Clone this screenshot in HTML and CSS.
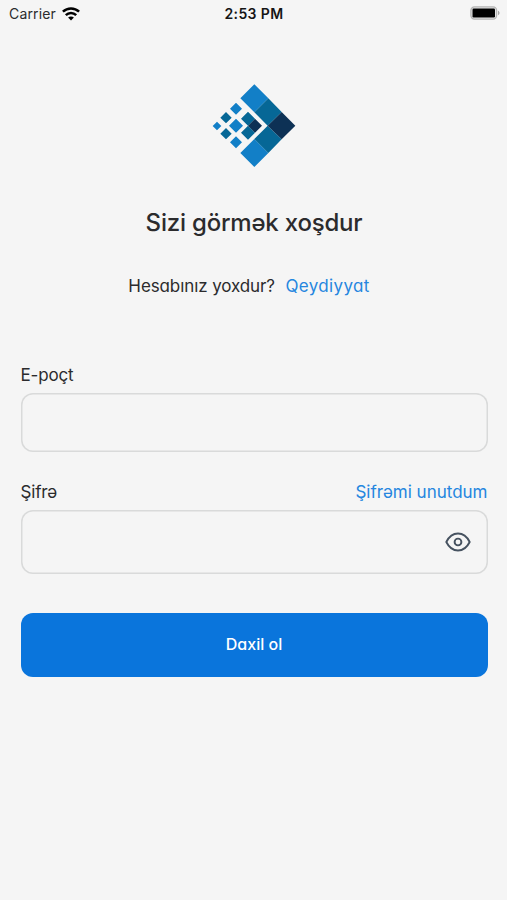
FILE: index.html
```html
<!DOCTYPE html>
<html lang="az">
<head>
<meta charset="utf-8">
<title>Daxil ol</title>
<link rel="stylesheet" href="styles.css">
</head>
<body>
<header class="status">
  <div class="carrier"><span>Carrier</span>
    <svg class="wifi" viewBox="0 0 18 14" fill="none" stroke="#000" stroke-width="2.5"><path d="M.9 4.7C5.5.3 12.500.3 17.100 4.700M3.800 8.100c3-2.900 7.400-2.900 10.400 0"/><path d="M9 13.500 6.100 10.600c1.600-1.500 4.200-1.500 5.800 0Z" fill="#000" stroke="none"/></svg>
  </div>
  <span class="time">2:53 PM</span>
  <svg class="battery" viewBox="0 0 31 14"><rect x=".9" y=".9" width="25.700" height="12.200" rx="3.500" fill="#e6e6e6" stroke="#b4b4b4" stroke-width="1.300"/><rect x="2.500" y="2.500" width="22.500" height="9" rx="1.200"/><path d="M28 4.800c2 .7 2 3.700 0 4.400Z" fill="#a6a6a6"/></svg>
</header>
<main class="login">
  <svg class="logo" viewBox="23 23 252 252">
    <g fill="#127fc7"><path d="M150 24 192 66 150 108 108 66ZM150 188 192 230 150 272 108 230ZM95 79 113 97 95 115 77 97ZM38 136 51 149 38 162 25 149ZM95 127 116 148 95 169 74 148ZM95 180 113 198 95 216 77 198Z"/></g>
    <g fill="#066796"><path d="M192 66 232 107 190 148 150 108ZM190 148 232 189 192 230 150 188ZM131 106 152 127 131 148 110 127ZM131 148 152 169 131 190 110 169ZM65 107 82 124 65 141 48 124ZM65 155 82 172 65 189 48 172Z"/></g>
    <path fill="#0d3155" d="M232 107 273 148 232 189 190 148ZM152 127 173 148 152 169 131 148Z"/>
  </svg>
  <h1 class="title">Sizi görmək xoşdur</h1>
  <p class="signup"><span class="question">Hesabınız yoxdur?</span><a class="link register">Qeydiyyat</a></p>
  <form class="form">
    <div class="row"><label class="email-label" for="email">E-poçt</label></div>
    <div class="field email"><input id="email" type="email"></div>
    <div class="row second"><label class="pass-label" for="password">Şifrə</label><a class="link forgot">Şifrəmi unutdum</a></div>
    <div class="field password"><input id="password" type="password">
      <svg class="eye" viewBox="0 0 26 20" fill="none" stroke="#465260" stroke-width="1.900" stroke-linejoin="round"><path d="M1.300 10C4 4.600 8 1.500 13 1.500S22 4.600 24.700 10C22 15.400 18 18.500 13 18.500S4 15.400 1.300 10Z"/><circle cx="13" cy="10" r="3.400"/></svg>
    </div>
    <button class="submit" type="button">Daxil ol</button>
  </form>
</main>
</body>
</html>
```
FILE: styles.css
```css
* { box-sizing: border-box; }
body {
  margin: 0;
  min-height: 900px;
  background: #f5f5f5;
  color: #2b2b2d;
  font-family: Inter, "Noto Sans", sans-serif;
  font-feature-settings: "cv11" 1;
}
.status {
  height: 28px;
  padding: 0 6px 0 9px;
  display: grid;
  grid-template-columns: 1fr auto 1fr;
  align-items: center;
  font-size: 14px;
  line-height: 28px;
  font-feature-settings: normal;
}
.carrier { display: flex; align-items: center; gap: 6px; letter-spacing: .15px; }
.wifi { width: 18px; height: 14px; margin-top: -1px; }
.time { font-weight: 600; color: #151515; letter-spacing: .4px; margin-right: 2px; }
.battery { width: 31px; height: 14px; justify-self: end; margin-top: -2px; }
.login { display: flex; flex-direction: column; align-items: center; padding: 56px 19.500px 0 20.500px; }
.logo { width: 84px; height: 84px; }
.title { margin: 39px 0 0; font-size: 24px; line-height: 32px; font-weight: 500; letter-spacing: -.2px; white-space: nowrap; }
.signup { margin: 35px 10px 0 0; display: flex; gap: 10.500px; font-size: 17px; line-height: 24px; white-space: nowrap; }
.question { letter-spacing: -.1px; }
.register { letter-spacing: .35px; }
.link { color: #2586df; }
.form { width: 100%; margin-top: 65px; }
.row { display: flex; justify-content: space-between; font-size: 17px; line-height: 24px; height: 30px; }
.email-label, .pass-label { letter-spacing: -.15px; }
.second { margin-top: 28px; }
.field { display: flex; align-items: center; border-radius: 12px; box-shadow: inset 0 0 0 1.500px #d9dada; padding-right: 17px; }
.field input { flex: 1; min-width: 0; height: 100%; border: 0; outline: 0; background: transparent; padding: 0 16px; font: inherit; }
.email { height: 59px; }
.password { height: 64px; }
.eye { width: 26px; height: 20px; }
.submit {
  display: block;
  width: 100%;
  height: 64px;
  margin-top: 39px;
  border: 0;
  border-radius: 12px;
  background: #0a75dc;
  color: #fff;
  font: 500 16px/24px Inter, "Noto Sans", sans-serif;
  font-feature-settings: "cv11" 1;
  padding-bottom: 3px;
}
```
